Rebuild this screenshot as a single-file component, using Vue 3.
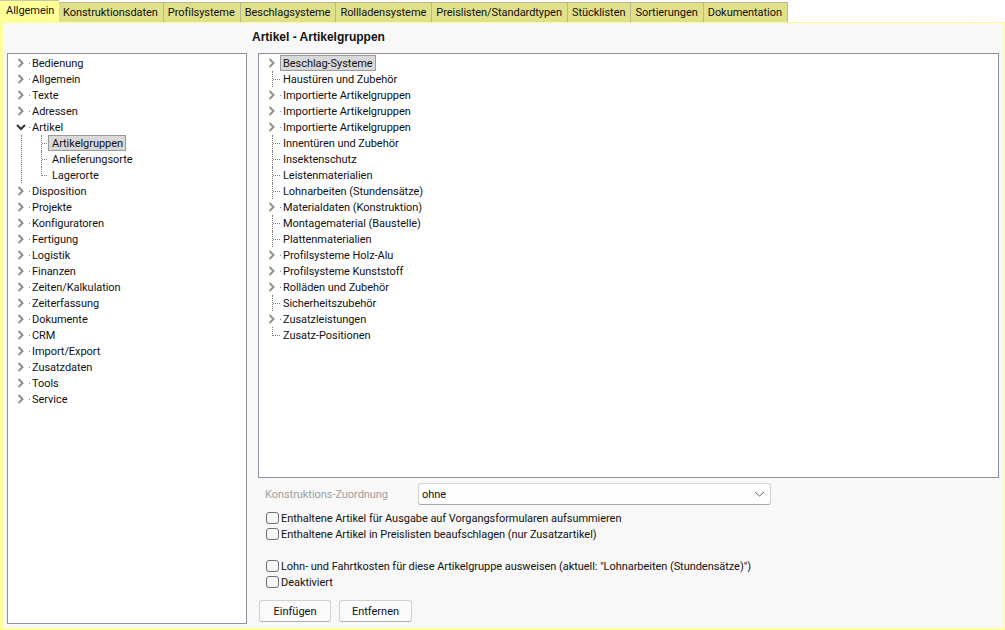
<script setup>
const tabs = ['Konstruktionsdaten', 'Profilsysteme', 'Beschlagsysteme', 'Rollladensysteme', 'Preislisten/Standardtypen', 'Stücklisten', 'Sortierungen', 'Dokumentation']

const navTop = ['Bedienung', 'Allgemein', 'Texte', 'Adressen']
const navChildren = [
  { label: 'Artikelgruppen', selected: true },
  { label: 'Anlieferungsorte' },
  { label: 'Lagerorte', last: true },
]
const navBottom = ['Disposition', 'Projekte', 'Konfiguratoren', 'Fertigung', 'Logistik', 'Finanzen', 'Zeiten/Kalkulation', 'Zeiterfassung', 'Dokumente', 'CRM', 'Import/Export', 'Zusatzdaten', 'Tools', 'Service']

const groups = [
  { label: 'Beschlag-Systeme', open: true, selected: true },
  { label: 'Haustüren und Zubehör' },
  { label: 'Importierte Artikelgruppen', open: true },
  { label: 'Importierte Artikelgruppen', open: true },
  { label: 'Importierte Artikelgruppen', open: true },
  { label: 'Innentüren und Zubehör' },
  { label: 'Insektenschutz' },
  { label: 'Leistenmaterialien' },
  { label: 'Lohnarbeiten (Stundensätze)' },
  { label: 'Materialdaten (Konstruktion)', open: true },
  { label: 'Montagematerial (Baustelle)' },
  { label: 'Plattenmaterialien' },
  { label: 'Profilsysteme Holz-Alu', open: true },
  { label: 'Profilsysteme Kunststoff', open: true },
  { label: 'Rolläden und Zubehör', open: true },
  { label: 'Sicherheitszubehör' },
  { label: 'Zusatzleistungen', open: true },
  { label: 'Zusatz-Positionen', last: true },
]
</script>

<template>
  <div class="app">
    <div class="tabs">
      <div class="tab active">Allgemein</div>
      <div v-for="t in tabs" :key="t" class="tab">{{ t }}</div>
    </div>

    <div class="panel">
      <div class="nav tree">
        <div v-for="n in navTop" :key="n" class="row">
          <svg class="exp" width="17" height="16"><path d="M5.500 4l4 4-4 4" /><rect x="16" y="8" width="1" height="1" /></svg>
          <span class="label">{{ n }}</span>
        </div>
        <div class="row">
          <svg class="exp down" width="17" height="16"><path d="M4 6l4 4 4-4" /><rect x="16" y="8" width="1" height="1" /></svg>
          <span class="label">Artikel</span>
        </div>
        <div class="children">
          <div v-for="c in navChildren" :key="c.label" class="row">
            <span class="elbow" :class="{ last: c.last }"></span>
            <span class="label" :class="{ selected: c.selected }">{{ c.label }}</span>
          </div>
        </div>
        <div v-for="n in navBottom" :key="n" class="row">
          <svg class="exp" width="17" height="16"><path d="M5.500 4l4 4-4 4" /><rect x="16" y="8" width="1" height="1" /></svg>
          <span class="label">{{ n }}</span>
        </div>
      </div>

      <div class="main">
        <div class="title">Artikel - Artikelgruppen</div>
        <div class="groups tree">
          <div v-for="(g, i) in groups" :key="i" class="row">
            <svg v-if="g.open" class="exp" width="17" height="16"><path d="M5.500 4l4 4-4 4" /><rect x="16" y="8" width="1" height="1" /></svg>
            <span v-else class="twig" :class="{ last: g.last }"></span>
            <span class="label" :class="{ selected: g.selected }">{{ g.label }}</span>
          </div>
        </div>

        <div class="assign">
          <span class="assign-label">Konstruktions-Zuordnung</span>
          <div class="select">
            <span>ohne</span>
            <svg width="11" height="6"><path d="M1 1l4.500 4 4.500-4" /></svg>
          </div>
        </div>

        <div class="checks">
          <label class="check"><span class="box"></span>Enthaltene Artikel für Ausgabe auf Vorgangsformularen aufsummieren</label>
          <label class="check"><span class="box"></span>Enthaltene Artikel in Preislisten beaufschlagen (nur Zusatzartikel)</label>
          <label class="check spaced"><span class="box"></span>Lohn- und Fahrtkosten für diese Artikelgruppe ausweisen (aktuell: "Lohnarbeiten (Stundensätze)")</label>
          <label class="check"><span class="box"></span>Deaktiviert</label>
        </div>

        <div class="buttons">
          <button class="btn first">Einfügen</button>
          <button class="btn second">Entfernen</button>
        </div>
      </div>
    </div>
  </div>
</template>

<style>
html, body {
  margin: 0;
  background: #fff;
}
</style>

<style scoped>
.app {
  width: 1005px;
  height: 630px;
  display: flex;
  flex-direction: column;
  font-family: Roboto, "Liberation Sans", sans-serif;
  font-size: 11px;
  letter-spacing: -0.05px;
  color: #111;
  overflow: hidden;
}

.tabs {
  height: 22px;
  display: flex;
  align-items: flex-end;
}

.tab {
  height: 20px;
  line-height: 19px;
  box-sizing: border-box;
  padding: 0 5px 0 4px;
  background: #e1e08a;
  border: 1px solid #b9b98f;
  border-left: none;
  border-bottom: none;
  white-space: nowrap;
}

.tab.active {
  height: 22px;
  line-height: 21px;
  width: 59px;
  padding: 0 0 0 6px;
  background: #ffff99;
  border: none;
  box-shadow: inset 0 1px 0 #c8c8a0;
}

.panel {
  flex: 1;
  min-height: 0;
  display: flex;
  background: #f8f8f8;
  border: 3px solid #ffff99;
  border-width: 1px 1px 2px 3px;
  padding-left: 4px;
}

.tree {
  background: #fff;
  border: 1px solid #8f8f9d;
  box-sizing: border-box;
  padding: 1px 0 0 5px;
}

.nav {
  width: 240px;
  margin: 30px 0 4px;
}

.row {
  height: 16px;
  display: flex;
  line-height: 16px;
  white-space: nowrap;
}

.exp {
  flex: none;
  margin-right: -1px;
  fill: #808080;
}

.exp path {
  fill: none;
  stroke: #8f8f8f;
  stroke-width: 2px;
}

.exp.down path {
  stroke: #333;
}

.label {
  padding: 0 2px;
  border: 1px solid transparent;
  height: 16px;
  box-sizing: border-box;
}

.children .label {
  padding-left: 3px;
}

.label.selected {
  background: #d9d9d9;
  border-color: #999;
}

.children {
  margin-left: 8px;
  padding-left: 12px;
  border-left: 1px dotted #808080;
}

.elbow {
  flex: none;
  width: 6px;
  height: 100%;
  margin-left: 7px;
  border-left: 1px dotted #808080;
  background: linear-gradient(to right, #808080 50%, transparent 50%) 0 8px / 2px 1px repeat-x;
}

.elbow.last {
  height: 9px;
}

.twig {
  flex: none;
  width: 8px;
  height: 100%;
  margin: 0 -1px 0 8px;
  border-left: 1px dotted #808080;
  background: linear-gradient(to right, #808080 50%, transparent 50%) 0 8px / 2px 1px repeat-x;
}

.twig.last {
  height: 9px;
}

.main {
  flex: 1;
  min-width: 0;
  margin-left: 5px;
  display: flex;
  flex-direction: column;
}

.title {
  height: 30px;
  line-height: 28px;
  font-weight: 700;
  font-family: "Liberation Sans", sans-serif;
  font-size: 12px;
  letter-spacing: 0;
}

.groups {
  flex: none;
  width: 741px;
  height: 425px;
  margin-left: 6px;
}

.assign {
  display: flex;
  align-items: center;
  margin: 5px 0 0 13px;
}

.assign-label {
  width: 153px;
  color: #a0a0a0;
}

.select {
  width: 353px;
  height: 22px;
  box-sizing: border-box;
  display: flex;
  align-items: center;
  justify-content: space-between;
  padding: 0 4px 0 3px;
  background: linear-gradient(#fff, #fdfdfd);
  border: 1px solid #d0d0d0;
  border-bottom-color: #a8a8a8;
  border-radius: 3px;
}

.select svg {
  fill: none;
  stroke: #666;
  margin-right: 1px;
}

.checks {
  margin: 5px 0 0 14px;
}

.check {
  height: 16px;
  display: flex;
  align-items: center;
  white-space: nowrap;
}

.check.spaced {
  margin-top: 16px;
}

.box {
  width: 11px;
  height: 10px;
  margin-right: 2px;
  background: #f6f6f6;
  border: 1px solid #707070;
  border-radius: 3px;
  flex: none;
}

.buttons {
  display: flex;
  gap: 8px;
  margin: 10px 0 0 7px;
}

.btn {
  width: 72px;
  height: 22px;
  padding: 0;
  font: inherit;
  color: inherit;
  background: #fbfbfb;
  border: 1px solid #d0d0d0;
  border-bottom-color: #b0b0b0;
  border-radius: 3px;
}

.btn.second {
  width: 73px;
}
</style>
